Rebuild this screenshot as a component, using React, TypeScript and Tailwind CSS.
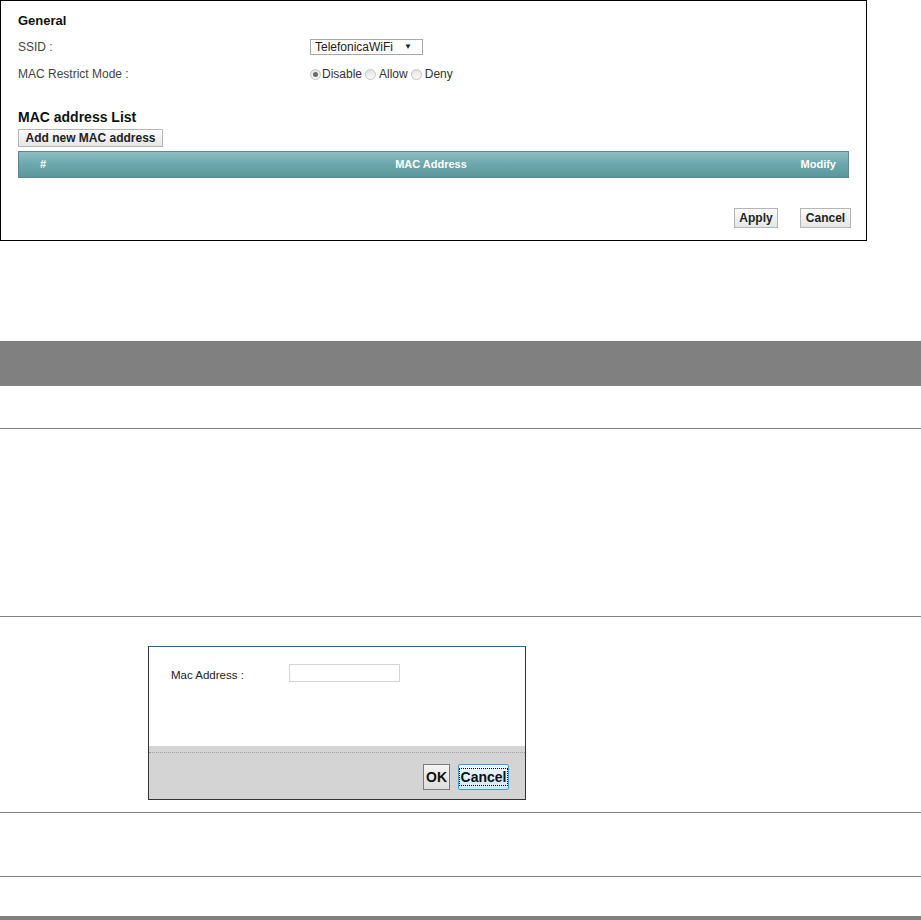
import React from "react";

const font = { fontFamily: '"Liberation Sans", Arial, sans-serif' };

function Radio({ checked }: { checked?: boolean }) {
  return (
    <span className="inline-flex h-[11px] w-[11px] items-center justify-center rounded-full border border-[#c4c4c4] bg-gradient-to-b from-[#e4e4e4] to-[#fafafa]">
      {checked && <span className="h-[5px] w-[5px] rounded-full bg-[#6b6b6b]" />}
    </span>
  );
}

function OldButton({ children, className = "" }: { children: React.ReactNode; className?: string }) {
  return (
    <button
      className={`border border-[#b5b5b5] bg-gradient-to-b from-[#fbfbfb] to-[#e6e6e6] text-[12px] font-bold text-[#222] ${className}`}
    >
      {children}
    </button>
  );
}

export default function App() {
  return (
    <div className="w-[921px] bg-white" style={font}>
      {/* Router screen */}
      <div className="h-[241px] w-[867px] border border-black px-[17px] pt-[12px]">
        <div className="text-[13px] font-bold leading-[16px] text-[#111]">General</div>
        <div className="mt-[10px] flex h-[16px] items-center text-[12px] text-[#444]">
          <span className="w-[292px]">SSID :</span>
          <div className="flex h-[16px] w-[113px] items-center justify-between border border-[#a9a9a9] px-[4px] text-[12px] text-[#222]">
            <span>TelefonicaWiFi</span>
            <span className="mr-[6px] text-[8px]">▼</span>
          </div>
        </div>
        <div className="mt-[12px] flex h-[14px] items-center text-[12px] text-[#444]">
          <span className="w-[292px]">MAC Restrict Mode :</span>
          <div className="flex items-center text-[12px] text-[#333]">
            <Radio checked />
            <span className="ml-[1px]">Disable</span>
            <span className="ml-[3px]" />
            <Radio />
            <span className="ml-[3px]">Allow</span>
            <span className="ml-[3px]" />
            <Radio />
            <span className="ml-[3px]">Deny</span>
          </div>
        </div>
        <div className="mt-[28px] text-[14px] font-bold leading-[16px] text-[#111]">MAC address List</div>
        <OldButton className="mt-[3px] h-[18px] w-[145px] px-[3px] leading-[16px]">Add new MAC address</OldButton>
        <div className="mt-[2px] flex h-[27px] items-center border border-[#5b8a8e] bg-gradient-to-b from-[#8cbfc3] via-[#6aa7ac] to-[#5c979b] text-[11px] font-bold text-white">
          <span className="w-[45px] pl-[21px]">#</span>
          <span className="flex-1 pl-[10px] text-center">MAC Address</span>
          <span className="w-[60px] pr-[12px] text-right">Modify</span>
        </div>
        <div className="mt-[30px] -mr-[2px] flex justify-end gap-[22px]">
          <OldButton className="h-[20px] w-[44px]">Apply</OldButton>
          <OldButton className="h-[20px] w-[51px]">Cancel</OldButton>
        </div>
      </div>

      {/* Table */}
      <div className="mt-[100px] h-[45px] bg-[#808080]" />
      <div className="h-[43px] border-b border-[#808080]" />
      <div className="h-[188px] border-b border-[#808080]" />
      <div className="h-[196px] border-b border-[#808080] pl-[148px] pt-[29px]">
        <div className="flex h-[154px] w-[378px] flex-col border border-[#333] border-t-[#1c6ea4]">
          <div className="flex h-[99px] items-start pl-[22px] pt-[17px] text-[11.5px] text-[#222]">
            <span className="mt-[3px] w-[118px]">Mac Address :</span>
            <div className="h-[18px] w-[111px] border border-[#d4d4d4]" />
          </div>
          <div className="flex flex-1 flex-col bg-[#d4d4d4]">
            <div className="mt-[6px] border-t border-dotted border-[#a0a0a0]" />
            <div className="mt-[11px] flex justify-end gap-[8px] pr-[16px]">
              <button className="h-[26px] w-[27px] border border-[#7a7a7a] bg-gradient-to-b from-[#f5f5f5] to-[#dcdcdc] text-[14px] font-bold text-[#111]">
                OK
              </button>
              <button className="flex h-[26px] w-[51px] items-center justify-center rounded-[2px] border border-[#3c9bd6] bg-gradient-to-b from-[#eaf6fd] to-[#cfe8f7] text-[14px] font-bold text-[#111]">
                <span className="border border-dotted border-black px-[1px] leading-[16px]">Cancel</span>
              </button>
            </div>
          </div>
        </div>
      </div>
      <div className="h-[64px] border-b border-[#808080]" />
      <div className="h-[39px]" />
      <div className="h-[4px] bg-[#808080]" />
    </div>
  );
}
